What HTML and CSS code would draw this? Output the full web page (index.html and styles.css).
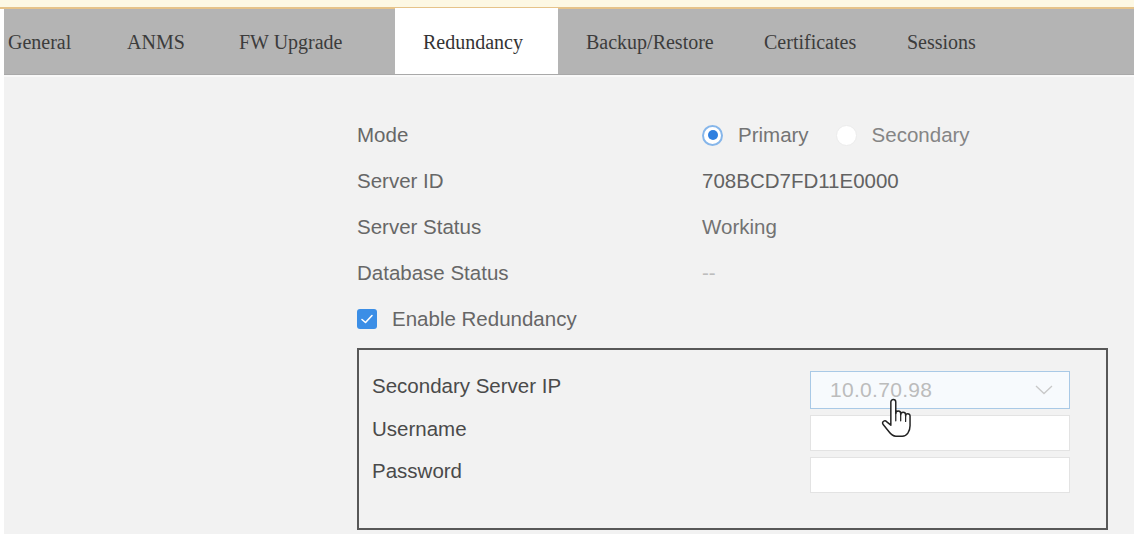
FILE: index.html
```html
<!DOCTYPE html>
<html lang="en">
<head>
<meta charset="utf-8">
<title>Redundancy</title>
<link rel="stylesheet" href="styles.css">
</head>
<body>
<div class="page">
  <div class="topline"></div>
  <nav class="tabbar">
    <div class="tab first">General</div>
    <div class="tab anms">ANMS</div>
    <div class="tab fw">FW Upgrade</div>
    <div class="tab active">Redundancy</div>
    <div class="tab backup">Backup/Restore</div>
    <div class="tab certs">Certificates</div>
    <div class="tab">Sessions</div>
  </nav>
  <main class="content">
    <div class="form">
      <div class="row">
        <div class="label">Mode</div>
        <div class="value radios">
          <label class="option"><span class="radio checked"></span><span class="opt-text">Primary</span></label>
          <label class="option"><span class="radio"></span><span class="opt-text light">Secondary</span></label>
        </div>
      </div>
      <div class="row">
        <div class="label">Server ID</div>
        <div class="value">708BCD7FD11E0000</div>
      </div>
      <div class="row">
        <div class="label">Server Status</div>
        <div class="value soft">Working</div>
      </div>
      <div class="row">
        <div class="label">Database Status</div>
        <div class="value dash">--</div>
      </div>
      <div class="row">
        <label class="check-row">
          <span class="checkbox">
            <svg width="14" height="12" viewBox="0 0 14 12"><polyline points="2,6.5 5.5,9.5 12,2.5" fill="none" stroke="#fff" stroke-width="1.6" stroke-linecap="round" stroke-linejoin="round"/></svg>
          </span>
          <span>Enable Redundancy</span>
        </label>
      </div>

      <section class="box">
        <div class="box-row">
          <div class="box-label">Secondary Server IP</div>
          <div class="select">
            <span class="select-text">10.0.70.98</span>
            <svg class="chevron" width="18" height="10" viewBox="0 0 18 10"><polyline points="1,1 9,8.5 17,1" fill="none" stroke="#c8c8c8" stroke-width="1.3"/></svg>
          </div>
        </div>
        <div class="box-row">
          <div class="box-label">Username</div>
          <div class="input"></div>
        </div>
        <div class="box-row">
          <div class="box-label">Password</div>
          <div class="input"></div>
        </div>
        <svg class="cursor" width="32" height="42" viewBox="0 0 26 34">
          <path d="M8 15 V3.2 a2 2 0 0 1 4 0 V12.5 a2 2 0 0 1 4 0 v1 a2 2 0 0 1 4 0 v1 a1.8 1.8 0 0 1 3.6 0 V22.5 c0 4.5-2.6 8.5-6.3 8.5 h-5.2 c-2.5 0-4-1.4-5.6-3.6 L1.6 21.2 a1.8 1.8 0 0 1 2.9-2.1 L8 22 Z" fill="#fff" stroke="#222" stroke-width="1.2" stroke-linejoin="round"/>
          <path d="M12 12.5 v6 M16 13.5 v5 M20 14.5 v4.5" fill="none" stroke="#222" stroke-width="1" stroke-linecap="round"/>
        </svg>
      </section>
    </div>
  </main>
</div>
</body>
</html>
```

FILE: styles.css
```css
* { box-sizing: border-box; }

html, body {
  margin: 0;
  padding: 0;
  background: #ffffff;
}

body {
  width: 1134px;
  height: 534px;
  overflow: hidden;
  font-family: "Liberation Sans", Arial, sans-serif;
}

.page {
  display: flex;
  flex-direction: column;
  height: 534px;
}

.topline {
  flex-shrink: 0;
  height: 9px;
  background: #fdf8e4;
  border-bottom: 2px solid #e6c38a;
}

/* tab strip */
.tabbar {
  flex-shrink: 0;
  display: flex;
  margin-left: 4px;
  height: 66px;
  background: #b4b4b4;
  border-bottom: 1px solid #a9a9a9;
  font-family: "Liberation Serif", "Times New Roman", serif;
  font-size: 20px;
  color: #3c3c3c;
}

.tab {
  display: flex;
  align-items: center;
  padding: 2px 0 0 28px;
}

.tab.first { width: 95px; padding-left: 4px; }
.tab.anms { width: 112px; }
.tab.fw { width: 184px; }
.tab.active {
  width: 163px;
  margin-top: -1px;
  background: #ffffff;
  color: #333;
}
.tab.backup { width: 178px; }
.tab.certs { width: 143px; }

/* main panel */
.content {
  flex: 1;
  min-height: 0;
  margin-left: 4px;
  background: #f2f2f2;
  border-top: 2px solid #f9f9f9;
  padding: 35px 0 0 353px;
}

.form {
  width: 751px;
}

.row {
  display: flex;
  align-items: center;
  height: 46px;
  font-size: 20.5px;
  color: #676767;
}

.label {
  width: 345px;
}

.value {
  color: #626262;
}

.value.soft { color: #727272; }
.value.dash { color: #bdbdbd; }

.radios {
  display: flex;
  align-items: center;
  gap: 27px;
}

.option {
  display: flex;
  align-items: center;
  gap: 15px;
}

.opt-text { color: #747474; }
.opt-text.light { color: #858585; }

.radio {
  width: 21px;
  height: 21px;
  border-radius: 50%;
  background: #ffffff;
  border: 1px solid #ececec;
  display: flex;
  align-items: center;
  justify-content: center;
}

.radio.checked {
  border: 2px solid #86b6ea;
}

.radio.checked::after {
  content: "";
  width: 10px;
  height: 10px;
  border-radius: 50%;
  background: #2f7fdf;
}

.check-row {
  display: flex;
  align-items: center;
  gap: 15px;
  color: #666;
}

.checkbox {
  width: 20px;
  height: 20px;
  border-radius: 3px;
  background: #3b8ee6;
  display: flex;
  align-items: center;
  justify-content: center;
}

/* secondary server panel */
.box {
  position: relative;
  margin-top: 6px;
  height: 182px;
  border: 2px solid #585858;
  padding: 21px 0 0 13px;
  display: flex;
  flex-direction: column;
  gap: 4px;
}

.box-row {
  display: flex;
  align-items: center;
  font-size: 20.5px;
  color: #4a4a4a;
}

.box-row + .box-row { margin-top: 2px; }

.box-label {
  width: 438px;
  padding-bottom: 8px;
}

.select {
  width: 260px;
  height: 38px;
  border: 1px solid #a9c9e6;
  background: #f7fafd;
  display: flex;
  align-items: center;
  justify-content: space-between;
  padding: 0 16px 0 19px;
}

.select-text {
  font-size: 21px;
  color: #bcbcbc;
  letter-spacing: 0.3px;
}

.input {
  width: 260px;
  height: 36px;
  background: #ffffff;
  border: 1px solid #e3e3e3;
}

.cursor {
  position: absolute;
  left: 522px;
  top: 48px;
}
```
